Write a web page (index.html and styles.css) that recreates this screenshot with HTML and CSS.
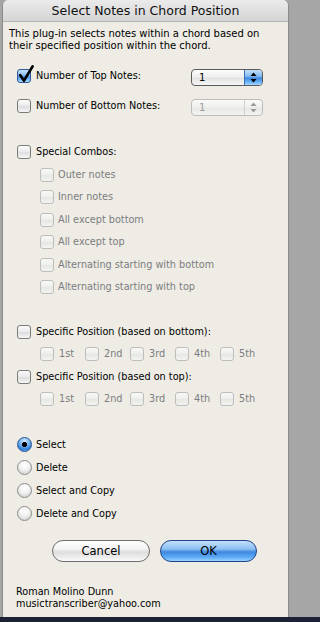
FILE: index.html
```html
<!DOCTYPE html>
<html>
<head>
<meta charset="utf-8">
<title>Select Notes in Chord Position</title>
<link rel="stylesheet" href="styles.css">
</head>
<body>
<div class="window">
  <div class="titlebar">Select Notes in Chord Position</div>
  <div class="content">
    <p class="desc">This plug-in selects notes within a chord based on<br>their specified position within the chord.</p>

    <div class="row row-pop first-pop">
      <span class="cb checked main"><svg class="check" width="20" height="20" viewBox="0 0 20 20"><path d="M3.2 6.2 L7 11.6 L15.6 -2.6" fill="none" stroke="#000" stroke-width="2.7" stroke-linecap="round" stroke-linejoin="round"/></svg></span>
      <span class="label">Number of Top Notes:</span>
      <span class="popup"><span class="pv">1</span><span class="arrows"><svg width="7" height="11" viewBox="0 0 7 11"><path d="M3.5 0.5 L6.5 4 L0.5 4 Z" fill="#000"/><path d="M0.5 7 L6.5 7 L3.5 10.5 Z" fill="#000"/></svg></span></span>
    </div>

    <div class="row row-pop second-pop">
      <span class="cb main"></span>
      <span class="label">Number of Bottom Notes:</span>
      <span class="popup disabled"><span class="pv">1</span><span class="arrows"><svg width="7" height="11" viewBox="0 0 7 11"><path d="M3.5 0.5 L6.5 4 L0.5 4 Z" fill="#9a9a9a"/><path d="M0.5 7 L6.5 7 L3.5 10.5 Z" fill="#9a9a9a"/></svg></span></span>
    </div>

    <div class="row special">
      <span class="cb main"></span>
      <span class="label">Special Combos:</span>
    </div>

    <div class="sublist">
      <div class="row"><span class="cb sub disabled"></span><span class="label dim sublabel">Outer notes</span></div>
      <div class="row"><span class="cb sub disabled"></span><span class="label dim sublabel">Inner notes</span></div>
      <div class="row"><span class="cb sub disabled"></span><span class="label dim sublabel">All except bottom</span></div>
      <div class="row"><span class="cb sub disabled"></span><span class="label dim sublabel">All except top</span></div>
      <div class="row"><span class="cb sub disabled"></span><span class="label dim sublabel">Alternating starting with bottom</span></div>
      <div class="row"><span class="cb sub disabled"></span><span class="label dim sublabel">Alternating starting with top</span></div>
    </div>

    <div class="row pos-bottom">
      <span class="cb main"></span>
      <span class="label">Specific Position (based on bottom):</span>
    </div>
    <div class="row positions pos-sub1">
      <span class="pos"><span class="cb disabled"></span><span class="label dim">1st</span></span>
      <span class="pos"><span class="cb disabled"></span><span class="label dim">2nd</span></span>
      <span class="pos"><span class="cb disabled"></span><span class="label dim">3rd</span></span>
      <span class="pos"><span class="cb disabled"></span><span class="label dim">4th</span></span>
      <span class="pos"><span class="cb disabled"></span><span class="label dim">5th</span></span>
    </div>

    <div class="row pos-top">
      <span class="cb main"></span>
      <span class="label">Specific Position (based on top):</span>
    </div>
    <div class="row positions pos-sub2">
      <span class="pos"><span class="cb disabled"></span><span class="label dim">1st</span></span>
      <span class="pos"><span class="cb disabled"></span><span class="label dim">2nd</span></span>
      <span class="pos"><span class="cb disabled"></span><span class="label dim">3rd</span></span>
      <span class="pos"><span class="cb disabled"></span><span class="label dim">4th</span></span>
      <span class="pos"><span class="cb disabled"></span><span class="label dim">5th</span></span>
    </div>

    <div class="radios">
      <div class="rrow"><span class="radio on"></span><span class="label">Select</span></div>
      <div class="rrow"><span class="radio"></span><span class="label">Delete</span></div>
      <div class="rrow"><span class="radio"></span><span class="label">Select and Copy</span></div>
      <div class="rrow"><span class="radio"></span><span class="label">Delete and Copy</span></div>
    </div>

    <div class="buttons">
      <span class="btn cancel">Cancel</span>
      <span class="btn ok">OK</span>
    </div>

    <div class="footer">Roman Molino Dunn<br>musictranscriber@yahoo.com</div>
  </div>
</div>
</body>
</html>
```

FILE: styles.css
```css
html, body {
  margin: 0;
  padding: 0;
}
body {
  width: 292px;
  height: 622px;
  overflow: hidden;
  background: linear-gradient(to bottom, #a6a6a6 0, #a6a6a6 617px, #1d2136 617px);
  font-family: "DejaVu Sans", "Liberation Sans", sans-serif;
  color: #000;
}
.window {
  margin-left: 2px;
  width: 285px;
  height: 617px;
  border-left: 1px solid #8a8a8a;
  border-right: 1px solid #8a8a8a;
  border-radius: 6px 6px 0 0;
  background: #eeece4;
  overflow: hidden;
}
.titlebar {
  height: 21px;
  line-height: 22px;
  border-bottom: 1px solid #b4b4b4;
  background: linear-gradient(#ebebeb, #d4d4d4);
  text-align: center;
  font-size: 12.5px;
  color: #111;
}
.content {
  padding: 6px 0 0 6px;
}
.desc {
  margin: 0;
  font-size: 10px;
  line-height: 12px;
}
.row {
  display: flex;
  align-items: flex-start;
  height: 14px;
}
.row-pop {
  height: 17px;
}
.first-pop { margin-top: 17px; }
.second-pop { margin-top: 13px; }
.special { margin-top: 29px; }
.sublist {
  display: flex;
  flex-direction: column;
  gap: 8.4px;
  margin-top: 9px;
}
.pos-bottom { margin-top: 31px; }
.pos-sub1 { margin-top: 8px; }
.pos-top { margin-top: 9px; }
.pos-sub2 { margin-top: 8px; }

.label {
  font-size: 9.7px;
  line-height: 14px;
  margin-left: 5px;
  white-space: nowrap;
}
.sublabel { margin-left: 4px; }
.dim { color: #7c7c82; }

.cb {
  box-sizing: border-box;
  width: 14px;
  height: 14px;
  flex: none;
  position: relative;
  border: 1px solid #7b7b7b;
  border-radius: 3px;
  background: linear-gradient(#fbfbfb, #ececec 45%, #dedede 55%, #f6f6f6);
}
.cb.main { margin-left: 8px; }
.cb.sub { margin-left: 31px; }
.cb.disabled {
  border-color: #bdbdbd;
  background: linear-gradient(#f8f8f6, #efefec 45%, #e6e6e3 55%, #f4f4f2);
}
.cb.checked {
  border-color: #2e5a9c;
  background: linear-gradient(#c6e0fa, #8ec0f1 40%, #4f97e6 55%, #7fc1fb 85%, #b8e0ff);
}
.check {
  position: absolute;
  left: -1px;
  top: -1px;
  overflow: visible;
}

.positions { padding-left: 31px; }
.pos {
  display: flex;
  width: 45px;
}

.popup {
  margin-left: auto;
  margin-right: 25px;
  width: 72px;
  height: 17px;
  box-sizing: border-box;
  display: flex;
  border: 1px solid #5b5b5b;
  border-radius: 4px;
  overflow: hidden;
  background: linear-gradient(#fdfdfd, #efefef 45%, #e2e2e2 55%, #f6f6f6);
}
.pv {
  flex: 1;
  font-size: 10px;
  line-height: 15px;
  padding-left: 7px;
}
.arrows {
  width: 17px;
  display: flex;
  align-items: center;
  justify-content: center;
  border-left: 1px solid #3d6fb3;
  background: linear-gradient(#c3dffa, #86bbf0 40%, #3f8ae2 55%, #74bcfb 85%, #a9d9ff);
}
.popup.disabled {
  border-color: #bcbcbc;
  background: linear-gradient(#fafaf8, #f0f0ee 45%, #e8e8e5 55%, #f4f4f2);
}
.popup.disabled .pv { color: #9a9aa0; }
.popup.disabled .arrows {
  border-left-color: #cfcfcf;
  background: transparent;
}

.radios {
  display: flex;
  flex-direction: column;
  gap: 8px;
  margin-top: 31px;
}
.rrow {
  display: flex;
  height: 15px;
}
.rrow .label {
  line-height: 15px;
  margin-left: 4px;
}
.radio {
  box-sizing: border-box;
  width: 15px;
  height: 15px;
  margin-left: 8px;
  flex: none;
  border-radius: 50%;
  border: 1px solid #8c8c8c;
  background: radial-gradient(circle at 50% 30%, #ffffff 0, #f2f2f2 45%, #d9d9d9 75%, #f0f0f0 100%);
}
.radio.on {
  border-color: #2b5696;
  background: radial-gradient(circle at 50% 50%, #000 0, #000 2.2px, transparent 2.9px),
              radial-gradient(circle at 50% 25%, #d4eafd 0, #7db8f0 40%, #2f7fdc 70%, #7cc4ff 100%);
}

.buttons {
  display: flex;
  gap: 10px;
  margin-top: 19px;
  padding-left: 43px;
}
.btn {
  box-sizing: border-box;
  height: 22px;
  border-radius: 11px;
  font-size: 11.5px;
  line-height: 20px;
  text-align: center;
}
.cancel {
  width: 98px;
  border: 1px solid #6e6e6e;
  background: linear-gradient(#ffffff, #f3f3f3 40%, #dedede 55%, #ececec 80%, #fbfbfb);
}
.ok {
  width: 97px;
  border: 1px solid #1f4388;
  background: linear-gradient(#c4e0fb, #8dc0f2 40%, #3f88de 55%, #5aa9f6 80%, #9ad3ff);
}

.footer {
  margin-top: 24px;
  margin-left: 7px;
  font-size: 9.7px;
  line-height: 12px;
}
```
